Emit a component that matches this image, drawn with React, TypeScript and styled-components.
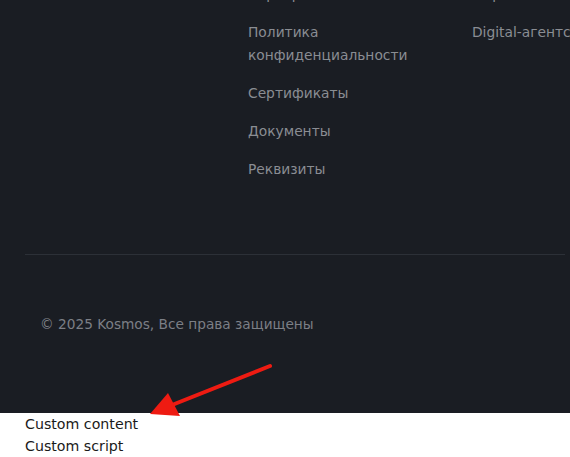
import React, { FC } from 'react';
import styled, { createGlobalStyle } from 'styled-components';

const GlobalStyle = createGlobalStyle`
  html, body {
    margin: 0;
    padding: 0;
    background: #ffffff;
    overflow: hidden;
  }
  body {
    font-family: "DejaVu Sans", "Noto Sans", sans-serif;
  }
`;

const Page = styled.div`
  position: relative;
  width: 570px;
  height: 457px;
  overflow: hidden;
`;

const Footer = styled.footer`
  background: #1a1d23;
  margin-top: -17px;
  padding: 0 5px 77px 25px;
  overflow: hidden;
`;

const Columns = styled.div`
  display: grid;
  grid-template-columns: 223px 224px 300px;
  width: 747px;
`;

const Column = styled.ul`
  list-style: none;
  margin: 0;
  padding: 0;
  display: flex;
  flex-direction: column;
  gap: 15px;
`;

const Link = styled.li`
  font-size: 13.8px;
  line-height: 23px;
  color: #8a8d93;
  white-space: nowrap;
`;

const Divider = styled.hr`
  margin: 73px 0 0 0;
  border: none;
  height: 1px;
  background: #2c3037;
`;

const Copyright = styled.div`
  margin-top: 58px;
  padding-left: 15px;
  font-size: 13.7px;
  line-height: 23px;
  color: #7c7f86;
`;

const Custom = styled.div`
  padding: 0 0 0 25px;
  font-size: 14.2px;
  line-height: 22px;
  color: #1a1a1a;
`;

const Arrow = styled.svg`
  position: absolute;
  left: 0;
  top: 0;
  pointer-events: none;
`;

const App: FC = () => (
  <Page>
    <GlobalStyle />
    <Footer>
      <Columns>
        <Column />
        <Column>
          <Link>Карьера</Link>
          <Link>
            Политика
            <br />
            конфиденциальности
          </Link>
          <Link>Сертификаты</Link>
          <Link>Документы</Link>
          <Link>Реквизиты</Link>
        </Column>
        <Column>
          <Link>Маркетинг</Link>
          <Link>Digital-агентство</Link>
        </Column>
      </Columns>
      <Divider />
      <Copyright>© 2025 Kosmos, Все права защищены</Copyright>
    </Footer>
    <Custom>
      <div>Custom content</div>
      <div>Custom script</div>
    </Custom>
    <Arrow width="570" height="457" viewBox="0 0 570 457">
      <line x1="270" y1="366" x2="172" y2="405" stroke="#ee1b12" strokeWidth="4" strokeLinecap="round" />
      <polygon points="150,414 168,393 180,416" fill="#ee1b12" />
    </Arrow>
  </Page>
);

export default App;
